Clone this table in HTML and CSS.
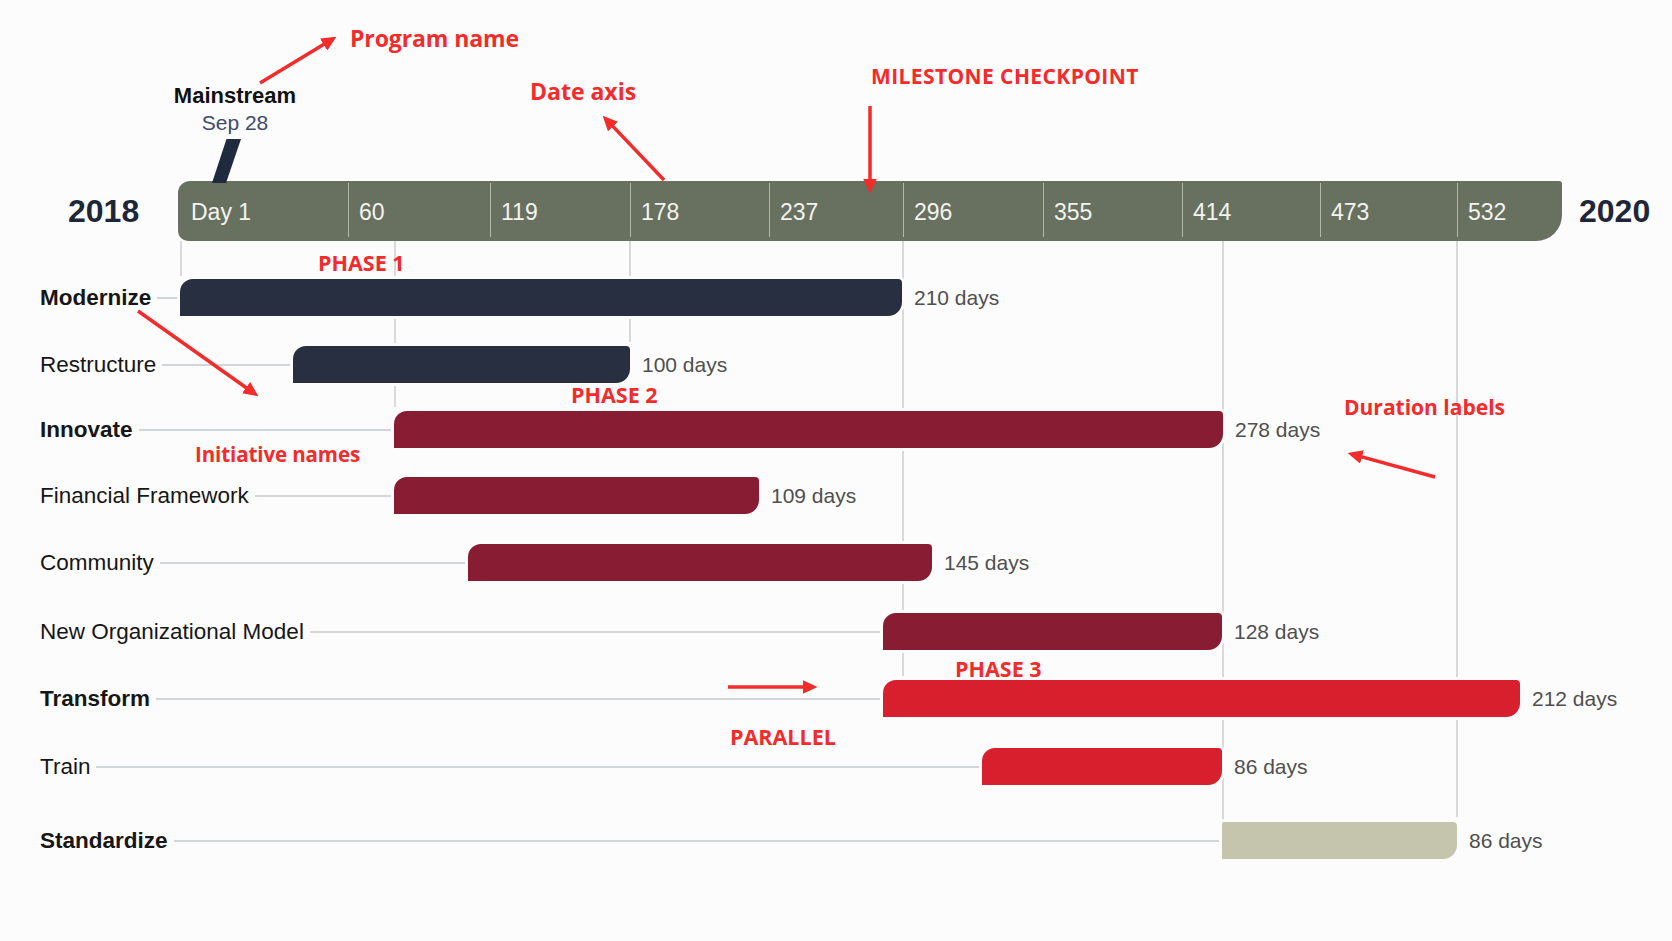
FILE: index.html
```html
<!DOCTYPE html>
<html lang="en">
<head>
<meta charset="utf-8">
<title>Mainstream roadmap</title>
<link rel="stylesheet" href="styles.css">
</head>
<body>
<div class="page">
  <header class="top">
    <div class="program">
      <div class="prog-name">Mainstream</div>
      <div class="prog-date">Sep 28</div>
      <svg class="pin" width="30" height="44" viewBox="0 0 30 44" aria-hidden="true">
        <polygon points="15.5,0 30,0 15,44 1,44" fill="#1f2a3e"/>
      </svg>
    </div>
  </header>

  <div class="axis-row">
    <div class="year year-left">2018</div>
    <div class="axis">
      <div class="tick first">Day 1</div>
      <div class="tick">60</div>
      <div class="tick">119</div>
      <div class="tick">178</div>
      <div class="tick">237</div>
      <div class="tick">296</div>
      <div class="tick">355</div>
      <div class="tick">414</div>
      <div class="tick">473</div>
      <div class="tick">532</div>
    </div>
    <div class="year year-right">2020</div>
  </div>

  <section class="chart">
    <div class="grid">
      <span class="gridline" style="left:180px;height:35px"></span>
      <span class="gridline" style="left:394px;height:166px"></span>
      <span class="gridline" style="left:629px;height:101px"></span>
      <span class="gridline" style="left:902px;height:435px"></span>
      <span class="gridline" style="left:1222px;height:578px"></span>
      <span class="gridline" style="left:1456px;height:576px"></span>
    </div>
    <div class="rows">
      <div class="row">
        <div class="head" style="width:180px"><span class="name strong">Modernize</span><span class="lead"></span></div>
        <div class="bar navy" style="width:722px"></div>
        <span class="dur">210 days</span>
      </div>
      <div class="row">
        <div class="head" style="width:293px"><span class="name">Restructure</span><span class="lead"></span></div>
        <div class="bar navy" style="width:337px"></div>
        <span class="dur">100 days</span>
      </div>
      <div class="row up-2">
        <div class="head" style="width:394px"><span class="name strong">Innovate</span><span class="lead"></span></div>
        <div class="bar maroon" style="width:829px"></div>
        <span class="dur">278 days</span>
      </div>
      <div class="row up-1">
        <div class="head" style="width:394px"><span class="name">Financial Framework</span><span class="lead"></span></div>
        <div class="bar maroon" style="width:365px"></div>
        <span class="dur">109 days</span>
      </div>
      <div class="row">
        <div class="head" style="width:468px"><span class="name">Community</span><span class="lead"></span></div>
        <div class="bar maroon" style="width:464px"></div>
        <span class="dur">145 days</span>
      </div>
      <div class="row down-2">
        <div class="head" style="width:883px"><span class="name">New Organizational Model</span><span class="lead"></span></div>
        <div class="bar maroon" style="width:339px"></div>
        <span class="dur">128 days</span>
      </div>
      <div class="row">
        <div class="head" style="width:883px"><span class="name strong">Transform</span><span class="lead"></span></div>
        <div class="bar red" style="width:637px"></div>
        <span class="dur">212 days</span>
      </div>
      <div class="row down-1">
        <div class="head" style="width:982px"><span class="name">Train</span><span class="lead"></span></div>
        <div class="bar red" style="width:240px"></div>
        <span class="dur">86 days</span>
      </div>
      <div class="row down-7">
        <div class="head" style="width:1222px"><span class="name strong">Standardize</span><span class="lead"></span></div>
        <div class="bar beige" style="width:235px"></div>
        <span class="dur">86 days</span>
      </div>
    </div>
  </section>

  <div class="notes">
    <svg class="arrows" width="1672" height="941" viewBox="0 0 1672 941" aria-hidden="true">
      <defs>
        <marker id="head" markerUnits="userSpaceOnUse" markerWidth="15" markerHeight="14" refX="10.5" refY="7" orient="auto">
          <path d="M0,0 L15,7 L0,14 z" fill="#f32b2b"/>
        </marker>
      </defs>
      <g stroke="#f32b2b" stroke-width="3.5" fill="none" marker-end="url(#head)">
        <line x1="260" y1="83" x2="332.6" y2="39.1"/>
        <line x1="664" y1="180" x2="605.8" y2="118.9"/>
        <line x1="870" y1="106" x2="870" y2="189"/>
        <line x1="138" y1="311" x2="254.7" y2="393.7"/>
        <line x1="1435" y1="477" x2="1351.9" y2="454.1"/>
        <line x1="728" y1="687" x2="813" y2="687"/>
      </g>
    </svg>
    <span class="note n-program">Program name</span>
    <span class="note n-date">Date axis</span>
    <span class="note n-milestone">MILESTONE CHECKPOINT</span>
    <span class="note n-phase1">PHASE 1</span>
    <span class="note n-phase2">PHASE 2</span>
    <span class="note n-phase3">PHASE 3</span>
    <span class="note n-parallel">PARALLEL</span>
    <span class="note n-initiative">Initiative names</span>
    <span class="note n-duration">Duration labels</span>
  </div>
</div>
</body>
</html>
```

FILE: styles.css
```css
* { box-sizing: border-box; }

html, body {
  margin: 0;
  padding: 0;
  background: #fcfcfc;
}

body {
  font-family: "Liberation Sans", Arial, sans-serif;
  color: #161616;
}

.page {
  position: relative;
  width: 1672px;
  height: 941px;
  overflow: hidden;
}

/* ---------- program header ---------- */
.top {
  height: 181px;
  padding-top: 84px;
}

.program {
  margin-left: 170px;
  width: 130px;
  text-align: center;
}

.prog-name {
  font-size: 22px;
  line-height: 24px;
  font-weight: 700;
  color: #111;
}

.prog-date {
  margin-top: 3px;
  font-size: 21px;
  line-height: 24px;
  color: #3e4a6c;
}

.pin {
  display: block;
  position: relative;
  z-index: 2;
  margin: 4px 0 0 41px;
}

/* ---------- axis ---------- */
.axis-row {
  display: flex;
  align-items: center;
  height: 60px;
  padding-left: 68px;
}

.year {
  font-size: 32px;
  line-height: 32px;
  font-weight: 700;
  color: #1e273a;
}

.year-left { width: 110px; }
.year-right { margin-left: 17px; }

.axis {
  width: 1384px;
  height: 60px;
  background: #687060;
  border-radius: 12px 3px 26px 10px / 12px 3px 26px 10px;
  display: grid;
  grid-template-columns: 170px 142px 140px 139px 134px 140px 139px 138px 137px 1fr;
}

.tick {
  margin: 2px 0 4px;
  padding: 4px 0 0 10px;
  line-height: 50px;
  font-size: 23px;
  color: #f3f3ef;
  border-left: 1px solid #b3b7a9;
}

.tick.first {
  border-left: 0;
  padding-left: 13px;
}

/* ---------- chart ---------- */
.chart {
  position: relative;
}

.grid {
  position: absolute;
  left: 0;
  top: 0;
  width: 100%;
  height: 100%;
}

.gridline {
  position: absolute;
  top: 0;
  width: 2px;
  background: #d7d9db;
}

.rows {
  position: relative;
  padding-top: 23px;
}

.row {
  display: flex;
  align-items: center;
  height: 67px;
}

.up-2 { margin-top: -2px; }
.up-1 { margin-top: -1px; }
.down-1 { margin-top: 1px; }
.down-2 { margin-top: 2px; }
.down-7 { margin-top: 7px; }

.head {
  display: flex;
  align-items: center;
  padding-left: 40px;
  flex: none;
}

.name {
  font-size: 22.5px;
  line-height: 26px;
  color: #161616;
  white-space: nowrap;
}

.name.strong { font-weight: 700; }

.lead {
  flex: 1;
  height: 2px;
  margin-left: 6px;
  background: #d3d6d9;
}

.bar {
  flex: none;
  height: 37px;
  border-radius: 13px 4px 14px 0;
  box-shadow: 0 0 0 3px #fcfcfc;
}

.navy { background: #272f41; }
.maroon { background: #881c33; }
.red { background: #d81f2d; }
.beige {
  background: #c5c5ad;
  border-radius: 2px 4px 14px 0;
}

.dur {
  margin-left: 12px;
  font-size: 21px;
  color: #4f4f4f;
  white-space: nowrap;
}

/* ---------- annotations ---------- */
.notes {
  position: absolute;
  left: 0;
  top: 0;
  width: 1672px;
  height: 941px;
  pointer-events: none;
}

.arrows {
  position: absolute;
  left: 0;
  top: 0;
}

.note {
  position: absolute;
  font-family: "Open Sans", "Liberation Sans", sans-serif;
  font-weight: 700;
  line-height: 1;
  color: #f32b2b;
  white-space: nowrap;
}

.n-program { left: 350px; top: 27px; font-size: 23px; letter-spacing: -0.1px; }
.n-date { left: 530px; top: 80px; font-size: 23px; }
.n-milestone { left: 871px; top: 66px; font-size: 21px; letter-spacing: 0.4px; }
.n-phase1 { left: 318px; top: 252px; font-size: 21.5px; }
.n-phase2 { left: 571px; top: 384px; font-size: 21.5px; }
.n-phase3 { left: 955px; top: 658px; font-size: 21.5px; }
.n-parallel { left: 730px; top: 726px; font-size: 21.5px; }
.n-initiative { left: 195px; top: 444px; font-size: 20.5px; letter-spacing: -0.1px; }
.n-duration { left: 1344px; top: 397px; font-size: 21px; }
```
